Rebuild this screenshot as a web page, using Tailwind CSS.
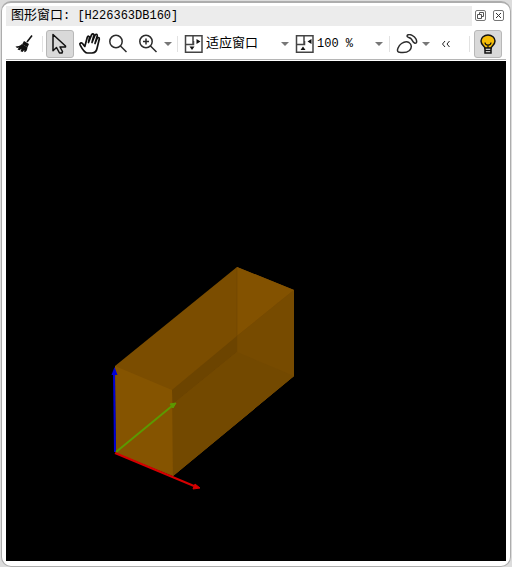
<!DOCTYPE html>
<html lang="zh-CN">
<head>
<meta charset="utf-8">
<meta name="viewport" content="width=device-width, initial-scale=1">
<title>图形窗口</title>
<script src="https://cdn.jsdelivr.net/npm/@tailwindcss/browser@4"></script>
</head>
<body class="bg-[#dcdcdc] font-['Liberation_Mono','Noto_Sans_CJK_SC',monospace] text-xs text-black">
<main class="flex h-screen flex-col px-px pt-px">
<div class="flex flex-1 flex-col rounded-[10px] border border-[#adadad] border-t-2 bg-white px-1 pb-[5px] mb-px">
  <header class="flex h-6 shrink-0 items-center pt-px">
    <h1 class="flex h-5 flex-1 items-center whitespace-pre bg-[#ececec] pl-[5px] leading-5"><span class="text-[13px]">图形窗口</span><span>: [H226363DB160]</span></h1>
    <div class="flex gap-1.5 pl-[3px] pr-px">
      <button aria-label="还原" class="size-3"><svg class="size-3" viewBox="0 0 12 12" fill="none" stroke="#555"><rect x=".5" y=".5" width="10" height="10" rx="1.5" stroke="#777"/><path d="M4.500 4V2.500h4v4H7M2.500 4.500h4v4h-4z"/></svg></button>
      <button aria-label="关闭" class="size-3"><svg class="size-3" viewBox="0 0 12 12" fill="none" stroke="#555"><rect x=".5" y=".5" width="10" height="10" rx="1.500" stroke="#777"/><path d="m3 3 5 5m0-5L3 8" stroke="#333"/></svg></button>
    </div>
  </header>
  <div role="toolbar" aria-label="视图工具" class="flex h-8 shrink-0 items-center pt-0.5">
    <button aria-label="清除" class="ml-1 flex h-7 w-7 items-center justify-center"><svg class="size-5" viewBox="0 0 20 20"><path d="M18 1.500 13 8" stroke="#111" stroke-width="1.600"/><path d="m10 7 5 3-1.500 3.200-5.300-3z" fill="#111"/><path d="M8 10c-2 1.800-4 2.500-6.500 2.500L3 14l2-.5-1.500 2 2 .8 2-1.600-1 2.500 2 .8 1.800-2v2.200c2 0 3-2.500 3.200-5z" fill="#111"/></svg></button>
    <span class="ml-1 mr-[3px] h-4 w-px bg-[#e2e2e2]"></span>
    <button aria-label="选择" aria-pressed="true" class="flex h-7 w-7 items-center justify-center rounded-[3px] border border-[#b8b8b8] bg-[#d9d9d9]"><svg class="h-6 w-5 shrink-0" viewBox="0 0 20 24" fill="none" stroke="#111" stroke-width="1.500"><path d="M3 2.500v16.200l3.500-3.200 3 5.500h2.500l.5-1.500-2.500-4.500h5.500v-1z" stroke-linejoin="round"/></svg></button>
    <button aria-label="平移" class="ml-1 flex h-7 w-6 items-center justify-center"><svg class="h-6 w-6 shrink-0" viewBox="0 0 24 24" fill="none" stroke="#111" stroke-width="1.700" stroke-linecap="round" stroke-linejoin="round"><path d="M6.800 14.500 4.500 11.500c-1.300-1.200-3.200-.2-2.500 1.200 1.500 2.800 4 8.300 7.500 8.300h4.500c2.800-.2 4.500-1.800 5-4.500l2.300-9.500c.3-1.700-1.700-2-2.200-.5L17 11.500l2.200-7.500c.4-1.800-1.700-2.200-2.300-.5L14 10.500l1.800-7c.3-1.800-1.700-2.200-2.300-.6L10.500 10.500l1-5c.2-1.500-1.700-1.800-2.200-.3z"/></svg></button>
    <button aria-label="缩放" class="ml-1 flex h-7 w-6 items-center justify-center"><svg class="size-5" viewBox="0 0 20 20" fill="none" stroke="#2b2b2b" stroke-width="1.500"><circle cx="8" cy="7.500" r="6.200"/><path d="m12.500 12 6 6"/></svg></button>
    <button aria-label="放大" class="ml-1 flex h-7 w-7 items-center justify-center"><svg class="size-5" viewBox="0 0 20 20" fill="none" stroke="#2b2b2b" stroke-width="1.500"><circle cx="8" cy="7.500" r="6.200"/><path d="m12.500 12 6 6M5 7.500h6M8 4.500v6"/></svg></button>
    <button aria-label="缩放选项" class="flex h-7 w-3 items-center justify-center"><svg class="h-1 w-2" viewBox="0 0 8 4" fill="#777"><path d="M0 0h8L4 4z"/></svg></button>
    <span class="ml-[3px] h-4 w-px bg-[#e2e2e2]"></span>
    <label for="fit" class="ml-1.5 w-5 shrink-0" title="适应"><svg class="size-5" viewBox="0 0 20 20" fill="none" stroke="#444" stroke-width="1.500"><path d="M1.500 1.800H18v16.500H1.500zM9 2v8.500M1.500 10.500h8V7"/><g fill="#111" stroke="none"><path d="m12.500 5 4 2.500-4 2.500zM5.500 12.500h5l-2.500 3.500z"/></g></svg></label>
    <div class="grid w-[85px] shrink-0 items-center">
      <select id="fit" class="col-start-1 row-start-1 h-6 w-full appearance-none bg-transparent pl-0.5 text-[13px]"><option>适应窗口</option></select>
      <svg class="pointer-events-none col-start-1 row-start-1 h-1 w-2 justify-self-end" viewBox="0 0 8 4" fill="#777"><path d="M0 0h8L4 4z"/></svg>
    </div>
    <label for="scale" class="ml-1.5 w-5 shrink-0" title="比例"><svg class="size-5" viewBox="0 0 20 20" fill="none" stroke="#444" stroke-width="1.500"><path d="M1.500 1.800H18v16.500H1.500zM9 2v8.500M1.500 10.500h8V7"/><g fill="#111" stroke="none"><path d="m16.500 5-4 2.500 4 2.500zM5.500 16h5L8 12.500z"/></g></svg></label>
    <div class="grid w-[68px] shrink-0 items-center">
      <select id="scale" class="col-start-1 row-start-1 h-6 w-full appearance-none bg-transparent pl-0.5"><option>100 %</option></select>
      <svg class="pointer-events-none col-start-1 row-start-1 h-1 w-2 justify-self-end" viewBox="0 0 8 4" fill="#777"><path d="M0 0h8L4 4z"/></svg>
    </div>
    <span class="ml-1.5 h-4 w-px bg-[#e2e2e2]"></span>
    <button aria-label="形状" class="ml-1.5 flex h-7 w-6 items-center justify-center"><svg class="h-5 w-6 shrink-0" viewBox="0 0 24 20" fill="none" stroke="#2b2b2b" stroke-width="1.500" stroke-linejoin="round"><path d="M5.500 9.500C8 7.800 11 7.300 13 8.500c3 2 3 5.500.5 8-2.500 2-7.500 2.300-11 1.500-2.500-1.200.3-6.700 3-8.500zM11.500 1c2.500-1.200 7 .8 8.500 4 1.300 3 .5 4.800-1.500 4-2-.8-2-3-3.500-4.300C13.500 3.500 10 3 11.500 1z"/></svg></button>
    <button aria-label="形状选项" class="flex h-7 w-3 items-center justify-center"><svg class="h-1 w-2" viewBox="0 0 8 4" fill="#777"><path d="M0 0h8L4 4z"/></svg></button>
    <button aria-label="更多" class="ml-1 flex h-7 w-5 items-center justify-center"><svg class="h-2 w-2.5" viewBox="0 0 10 8" fill="none" stroke="#222" stroke-width="1"><path d="M4 1 1.500 4 4 7M8.500 1 6 4l2.500 3"/></svg></button>
    <span class="ml-auto mr-1 h-4 w-px bg-[#e2e2e2]"></span>
    <button aria-label="光源" aria-pressed="true" class="mr-1 flex h-7 w-7 shrink-0 items-center justify-center rounded-[3px] border border-[#b8b8b8] bg-[#d9d9d9]"><svg class="size-5 shrink-0" viewBox="0 0 20 20" stroke="#111"><path d="M7 14.500c0-2.500-4-3.500-4-7.500a7 6 0 0 1 14 0c0 4-4 5-4 7.500z" fill="#f5bd08" stroke-width="1.500"/><path d="M7 8.500c0 2 1 2.500 3 2.500s3-.5 3-2.500M10 11v3" fill="none" stroke-width="1.200"/><path d="M7 14h6v5H7z" fill="#ddd" stroke-width="1.500"/><path d="M7 16.500h6" stroke-width="1.200"/></svg></button>
  </div>
  <section aria-label="三维视图" class="flex min-h-0 flex-1 border-t border-[#b5b5b5] pt-px">
    <svg class="min-h-0 w-full flex-1 bg-black" viewBox="0 0 500 500" role="img" aria-label="长方体与坐标轴">
      <path d="M109 305 231 206l57 23v86L167 415l-57-23z" fill="#7b4d00"/>
      <path d="m231 206 57 23-57 46z" fill="#835200"/>
      <path d="m231 275 57-46v86l-57-24z" fill="#784c00"/>
      <path d="m109 305 57 24 1 86-57-23z" fill="#855400"/>
      <path d="m166 329 65-54 57-46v86L167 415z" fill="#774b00"/>
      <path d="m166 329 65-54v16l-64 52z" fill="#6c4400"/>
      <path d="m167 343 64-52 57 24-121 100z" fill="#734900"/>
      <path d="M231 207v84" stroke="#6d4400" stroke-opacity=".5"/>
      <path d="m109 391-1-79" stroke="#0000d8" stroke-width="2"/><path d="m108.500 306-3 8h6z" fill="#0000d8"/>
      <path d="m110 391 56-46" stroke="#5c9900" stroke-width="2"/><path d="m170 342-6 1 3 4z" fill="#5c9900" stroke="#5c9900"/>
      <path d="m109 392 79 33" stroke="#d60000" stroke-width="2"/><path d="m194 427-5-4-2 5z" fill="#d60000" stroke="#d60000"/>
    </svg>
  </section>
</div>
</main>
</body>
</html>
